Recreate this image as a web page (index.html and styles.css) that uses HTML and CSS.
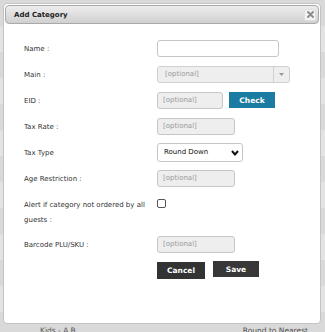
FILE: index.html
```html
<!DOCTYPE html>
<html lang="en">
<head>
    <meta charset="UTF-8">
    <meta name="viewport" content="width=device-width, initial-scale=1.0">
    <title>Add Category</title>
    <link rel="stylesheet" href="styles.css">
</head>
<body>
    <div class="backdrop">
        <div class="bg-row"></div>
        <div class="bg-row"></div>
        <div class="bg-row"></div>
        <div class="bg-row"></div>
        <div class="bg-row"></div>
        <div class="bg-row"></div>
        <div class="bg-row"></div>
        <div class="bg-row"></div>
        <div class="bg-row"></div>
        <div class="bg-row"></div>
        <div class="bg-row"></div>
        <div class="bg-row"></div>
        <div class="bg-row bg-text">
            <span class="bg-name">Kids - A.B.</span>
            <span class="bg-round">Round to Nearest</span>
        </div>
    </div>

    <div class="dialog">
        <div class="titlebar">
            <span class="title">Add Category</span>
            <button class="close" type="button">
                <svg width="7" height="7" viewBox="0 0 7 7">
                    <path d="M1 1 L6 6 M6 1 L1 6" stroke="#8a8a8a" stroke-width="1.8" stroke-linecap="round"/>
                </svg>
            </button>
        </div>
        <form class="form">
            <div class="row">
                <label>Name :</label>
                <input type="text" class="field field-name">
            </div>
            <div class="row">
                <label>Main :</label>
                <div class="combo">
                    <span class="combo-text">[optional]</span>
                    <span class="combo-arrow">
                        <svg width="5" height="3" viewBox="0 0 5 3"><path d="M0 0 L5 0 L2.5 3 Z" fill="#999"/></svg>
                    </span>
                </div>
            </div>
            <div class="row">
                <label>EID :</label>
                <input type="text" class="field field-eid" placeholder="[optional]">
                <button type="button" class="btn-check">Check</button>
            </div>
            <div class="row">
                <label>Tax Rate :</label>
                <input type="text" class="field field-short" placeholder="[optional]">
            </div>
            <div class="row">
                <label>Tax Type</label>
                <div class="select-wrap">
                    <select class="select">
                        <option>Round Down</option>
                        <option>Round Up</option>
                        <option>Round to Nearest</option>
                    </select>
                    <svg class="chevron" width="8" height="6" viewBox="0 0 8 6"><path d="M1 1 L4 4.5 L7 1" fill="none" stroke="#111" stroke-width="2"/></svg>
                </div>
            </div>
            <div class="row">
                <label>Age Restriction :</label>
                <input type="text" class="field field-short" placeholder="[optional]">
            </div>
            <div class="row row-alert">
                <label>Alert if category not ordered by all guests :</label>
                <input type="checkbox" class="check">
            </div>
            <div class="row">
                <label>Barcode PLU/SKU :</label>
                <input type="text" class="field field-short" placeholder="[optional]">
            </div>
            <div class="row row-actions">
                <button type="button" class="btn-dark btn-cancel">Cancel</button>
                <button type="button" class="btn-dark btn-save">Save</button>
            </div>
        </form>
    </div>
</body>
</html>
```

FILE: styles.css
```css
body {
    margin: 0;
    font-family: "DejaVu Sans", Verdana, sans-serif;
    font-size: 7px;
    color: #333;
    background-color: #dcdcdc;
    overflow: hidden;
}
.backdrop {
    width: 325px;
    height: 332px;
    overflow: hidden;
}
.bg-row {
    height: 26px;
    background-color: #d9d9d9;
}
.bg-row:nth-child(even) {
    background-color: #e3e3e3;
}
.bg-text {
    display: flex;
    padding-top: 14px;
    color: #555;
    font-size: 7.5px;
}
.bg-name {
    margin-left: 40px;
}
.bg-round {
    margin-left: auto;
    margin-right: 17px;
}
.dialog {
    position: absolute;
    top: 3px;
    left: 3px;
    width: 318px;
    height: 321px;
    box-sizing: border-box;
    background-color: white;
    border: 1px solid #c4c4c4;
    border-radius: 4px;
}
.titlebar {
    margin: 1px;
    height: 19px;
    box-sizing: border-box;
    border: 1px solid #a9a9a9;
    border-radius: 4px;
    background: linear-gradient(#ededed, #d0d0d0);
    display: flex;
    align-items: center;
    padding-left: 8px;
    padding-right: 2px;
}
.title {
    font-weight: bold;
    color: #222;
}
.close {
    margin-left: auto;
    width: 12px;
    height: 12px;
    padding: 0;
    border: 1px solid #e0e0e0;
    border-radius: 2px;
    background-color: #f2f2f2;
    display: flex;
    align-items: center;
    justify-content: center;
}
.form {
    padding: 10px 0 0 20px;
}
.row {
    display: flex;
    align-items: center;
    height: 26px;
}
.row label {
    width: 133px;
    flex-shrink: 0;
    line-height: 15px;
    padding-top: 2px;
}
.field {
    height: 17px;
    box-sizing: border-box;
    border: 1px solid #c6c6c6;
    border-radius: 3px;
    background-color: #eeeeee;
    font-family: inherit;
    font-size: 7px;
    padding: 0 5px;
    color: #333;
    margin: 0;
}
.field::placeholder {
    color: #999;
}
.field-name {
    width: 122px;
    background-color: white;
}
.field-eid {
    width: 66px;
}
.field-short {
    width: 78px;
}
.combo {
    width: 133px;
    height: 17px;
    box-sizing: border-box;
    border: 1px solid #d0d0d0;
    border-radius: 3px;
    background-color: #eeeeee;
    display: flex;
    align-items: center;
}
.combo-text {
    padding-left: 7px;
    color: #999;
    flex: 1;
}
.combo-arrow {
    width: 15px;
    height: 100%;
    border-left: 1px solid #d0d0d0;
    display: flex;
    align-items: center;
    justify-content: center;
}
.btn-check {
    margin-left: 6px;
    width: 46px;
    height: 16px;
    border: none;
    padding: 0;
    background-color: #1b7ba1;
    color: white;
    font-family: inherit;
    font-size: 7.5px;
    font-weight: bold;
}
.select-wrap {
    position: relative;
    width: 86px;
    height: 19px;
}
.select {
    appearance: none;
    width: 100%;
    height: 100%;
    box-sizing: border-box;
    border: 1px solid #c6c6c6;
    border-radius: 3px;
    background-color: white;
    font-family: inherit;
    font-size: 7px;
    color: #111;
    padding: 0 6px;
    margin: 0;
}
.chevron {
    position: absolute;
    right: 4px;
    top: 7px;
    pointer-events: none;
}
.row-alert {
    align-items: flex-start;
    height: 40px;
    padding-top: 5px;
    box-sizing: border-box;
}
.check {
    appearance: none;
    width: 9px;
    height: 9px;
    margin: 3px 0 0 0;
    border: 1px solid #555;
    border-radius: 2px;
    background-color: white;
}
.row-actions {
    padding-left: 133px;
}
.btn-dark {
    border: none;
    padding: 0;
    background-color: #333;
    color: white;
    font-family: inherit;
    font-size: 7.5px;
    font-weight: bold;
}
.btn-cancel {
    width: 48px;
    height: 17px;
    margin-top: 1px;
}
.btn-save {
    width: 46px;
    height: 16px;
    margin-left: 8px;
    margin-bottom: 2px;
    background-color: #383838;
}
```
